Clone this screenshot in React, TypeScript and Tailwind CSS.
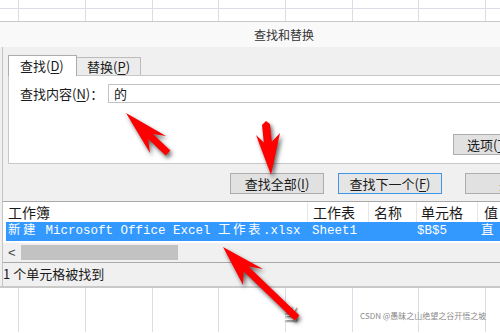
const GRID_W = ["w-[19px]", "w-[67px]", "w-[67px]", "w-[66px]", "w-[67px]", "w-[67px]", "w-[66px]", "w-[67px]", "w-[30px]"];

function GridRow({ cls }: { cls: string }) {
  return (
    <div className={`flex ${cls}`}>
      {GRID_W.map((w, i) => (
        <div key={i} className={`${w} shrink-0 h-full border-r border-[#dadde8]`} />
      ))}
    </div>
  );
}

function U({ c }: { c: string }) {
  return <span className="underline underline-offset-2">{c}</span>;
}

function Cjk({ t }: { t: string }) {
  return <span className="tracking-[2.5px]">{t}</span>;
}

export default function App() {
  return (
    <div className="relative w-[500px] h-[333px] overflow-hidden bg-white font-['Noto_Sans_CJK_SC',sans-serif] text-[#1a1a1a]">
      {/* top sheet grid */}
      <GridRow cls="h-[9px] border-b border-[#dadde8]" />
      <GridRow cls="h-[12px]" />

      {/* dialog */}
      <div className="w-[560px] border-t border-b-2 border-[#c9c9c9] bg-[#f0f0f0]">
        <div className="h-[25px] bg-[#f9f9f9] flex items-center pl-[254px] text-[12px] leading-none text-[#333]">
          查找和替换
        </div>
        <div className="border-l border-[#c4c4c4] ml-[2px]">
          <div className="pt-[8px]">
            {/* tabs */}
            <div className="flex h-[21px] pl-[5px]">
              <div className="relative z-10 w-[69px] h-[21px] bg-white border-t border-l border-r border-[#adadad] text-[13px] leading-[20px] pl-[11px]">
                查找(<U c="D" />)
              </div>
              <div className="mt-[2px] w-[64px] h-[19px] bg-[#ececec] border-t border-r border-[#bcbcbc] text-[13px] leading-[18px] pl-[10px]">
                替换(<U c="P" />)
              </div>
            </div>
            {/* panel */}
            <div className="relative -mt-px ml-[5px] h-[89px] bg-white border-t border-l border-b border-[#c8c8c8]">
              <div className="flex items-center mt-[8px] h-[19px]">
                <div className="w-[99px] shrink-0 pl-[11px] text-[13px] leading-none whitespace-nowrap">
                  查找内容(<U c="N" />)：
                </div>
                <div className="flex-1 h-[19px] border border-[#c3c3c3] bg-white text-[13px] leading-[17px] pl-[5px]">
                  的
                </div>
              </div>
              <div className="flex mt-[31px] pl-[444px]">
                <div className="w-[80px] shrink-0 h-[21px] bg-[#e1e1e1] border border-[#adadad] text-[13px] leading-[19px] pl-[13px] whitespace-nowrap">
                  选项(<U c="T" />)
                </div>
              </div>
            </div>
          </div>

          {/* buttons */}
          <div className="flex mt-[9px] pl-[227px] gap-[14px] h-[21px]">
            <div className="w-[94px] h-[21px] shrink-0 bg-[#e1e1e1] border border-[#adadad] text-[13px] leading-[19px] text-center whitespace-nowrap">
              查找全部(<U c="I" />)
            </div>
            <div className="w-[104px] h-[21px] shrink-0 bg-[#e5e5e5] border border-[#3d96e6] text-[13px] leading-[19px] text-center whitespace-nowrap">
              查找下一个(<U c="F" />)
            </div>
            <div className="ml-[9px] w-[80px] h-[21px] shrink-0 bg-[#e1e1e1] border border-[#adadad] text-[13px] leading-[19px] pl-[33px] whitespace-nowrap">
              关闭
            </div>
          </div>

          {/* result list */}
          <div className="mt-[7px] h-[62px] bg-white border-t border-b border-[#a9a9a9]">
            <div className="flex h-[20px] text-[14px] leading-[20px]">
              <div className="w-[305px] shrink-0 pl-[5px] border-r border-[#e6e6e6]">工作簿</div>
              <div className="w-[61px] shrink-0 pl-[5px] border-r border-[#e6e6e6]">工作表</div>
              <div className="w-[48px] shrink-0 pl-[5px] border-r border-[#e6e6e6]">名称</div>
              <div className="w-[61px] shrink-0 pl-[4px] border-r border-[#e6e6e6]">单元格</div>
              <div className="pl-[6px]">值</div>
            </div>
            <div className="ml-[3px] flex h-[19px] bg-[#3399ff] text-white text-[12.5px] leading-[19px] font-['Liberation_Mono','Noto_Sans_CJK_SC',monospace] whitespace-nowrap">
              <div className="w-[302px] shrink-0 pl-[2px]">
                <Cjk t="新建" /> Microsoft Office Excel <Cjk t="工作表" />.xlsx
              </div>
              <div className="w-[109px] shrink-0 pl-[4px]">Sheet1</div>
              <div className="w-[64px] shrink-0">$B$5</div>
              <div><Cjk t="直" /></div>
            </div>
            <div className="mt-[2px] h-[19px] bg-[#f0f0f0] flex items-center">
              <div className="w-[17px] shrink-0 pl-[5px] text-[13px] leading-none text-[#444] font-['Liberation_Sans',sans-serif]">&lt;</div>
              <div className="ml-[1px] w-[157px] h-[15px] bg-[#c2c2c2]" />
            </div>
          </div>

          {/* status */}
          <div className="h-[23px] pl-[0px] text-[13px] leading-[22px]">1 个单元格被找到</div>
        </div>
      </div>

      {/* bottom sheet grid */}
      <GridRow cls="h-[44px]" />

      {/* overlays */}
      <div className="absolute left-[283px] top-[305px] text-[15px] leading-none text-white [text-shadow:1px_1px_2px_#000]">当</div>
      <div className="absolute left-[360px] top-[312px] text-[8px] leading-none text-[#8a8a8a] [text-shadow:0_0_2px_#fff] whitespace-nowrap">
        CSDN @愚昧之山绝望之谷开悟之坡
      </div>
      <svg className="absolute left-0 top-0 drop-shadow-[2px_3px_2px_rgba(0,0,0,0.6)]" width="500" height="333" viewBox="0 0 500 333">
        <polygon fill="#ff0000" points="126,113 166,136 153,134 170.4,150.5 165.6,155.5 148.2,139 150,153" />
        <polygon fill="#ff0000" points="271,175 256,135 263.8,142.6 262,125 266,121 270,124 271.8,141.8 280,133" />
        <polygon fill="#ff0000" points="223,247 263,269 248.5,266.6 299.4,315.5 294.6,320.5 243.7,271.6 243,285" />
      </svg>
    </div>
  );
}
